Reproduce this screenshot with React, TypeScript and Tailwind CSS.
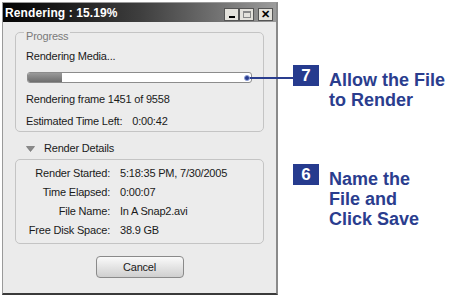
import React from "react"

const dialogFont = { fontFamily: '"Liberation Sans", Arial, sans-serif' }

const TitleButton = ({ children }: { children: React.ReactNode }) => (
    <div className="w-[15px] h-[13px] bg-[#e4e2dc] border border-[#555] flex items-center justify-center text-black">
        {children}
    </div>
)

const DetailRow = ({ label, value }: { label: string; value: string }) => (
    <div className="flex leading-[13px] mt-[6px] first:mt-0">
        <div className="w-[84px] text-right">{label}</div>
        <div className="ml-[10px]">{value}</div>
    </div>
)

const Callout = ({ num, lines }: { num: string; lines: string[] }) => (
    <div className="flex items-start">
        <div className="w-[26px] h-[21px] bg-[#263b8e] text-white font-bold text-[17px] flex items-center justify-center">
            {num}
        </div>
        <div className="ml-[10px] mt-[5px] text-[#2a3d8e] font-bold text-[18px] leading-[20px]">
            {lines.map((l, i) => (
                <div key={i}>{l}</div>
            ))}
        </div>
    </div>
)

export default function App() {
    return (
        <div className="relative w-[450px] h-[296px] bg-white flex overflow-hidden" style={dialogFont}>
            {/* dialog window */}
            <div className="ml-[2px] mt-[2px] w-[276px] h-[293px] border border-[#9a9a9a] border-r-2 border-b-2 border-b-[#3a3a3a] border-r-[#8a8a8a] bg-[#ebebeb] flex flex-col">
                <div className="h-[19px] bg-gradient-to-r from-[#050505] via-[#3e3e3e] to-[#9c9c9c] flex items-center pl-[2px] pr-[3px]">
                    <span className="text-white font-bold text-[12px] tracking-[0.1px]">Rendering : 15.19%</span>
                    <div className="ml-auto flex items-center mt-[3px]">
                        <TitleButton>
                            <div className="w-[6px] h-[2px] bg-black mt-[6px]" />
                        </TitleButton>
                        <TitleButton>
                            <div className="w-[8px] h-[7px] border border-[#888] border-t-2" />
                        </TitleButton>
                        <div className="w-[4px]" />
                        <TitleButton>
                            <span className="text-[11px] font-bold leading-none">✕</span>
                        </TitleButton>
                    </div>
                </div>

                <div className="px-[12px] text-[11px] text-[#1a1a1a] tracking-[-0.2px]">
                    <fieldset className="w-[249px] border border-[#c4c4c4] rounded-[5px] bg-[#ececec] px-[10px] pb-[3px]">
                        <legend className="ml-[-2px] px-[2px] pt-[8px] text-[#7a7a7a] leading-[13px]">Progress</legend>
                        <div className="mt-[7px] leading-[13px]">Rendering Media...</div>
                        <div className="mt-[9px] ml-[1px] w-[225px] h-[11px] rounded-[3px] border border-[#8c8c8c] bg-white overflow-hidden">
                            <div className="h-full bg-gradient-to-b from-[#9a9a9a] to-[#6e6e6e]" style={{ width: "15.19%" }} />
                        </div>
                        <div className="mt-[10px] leading-[13px]">Rendering frame 1451 of 9558</div>
                        <div className="mt-[9px] leading-[13px] flex">
                            <span>Estimated Time Left:</span>
                            <span className="ml-[10px]">0:00:42</span>
                        </div>
                    </fieldset>

                    <div className="mt-[10px] ml-[11px] flex items-center leading-[13px]">
                        <svg width="9" height="6" viewBox="0 0 9 6" className="mr-[9px]">
                            <path d="M0.5 0.5 L8.5 0.5 L4.5 5.5 Z" fill="#8a8a8a" stroke="#666" strokeWidth="0.6" />
                        </svg>
                        <span>Render Details</span>
                    </div>

                    <div className="mt-[4px] w-[249px] border border-[#c4c4c4] rounded-[5px] bg-[#ececec] pt-[7px] pb-[6px] px-[10px]">
                        <DetailRow label="Render Started:" value="5:18:35 PM, 7/30/2005" />
                        <DetailRow label="Time Elapsed:" value="0:00:07" />
                        <DetailRow label="File Name:" value="In A Snap2.avi" />
                        <DetailRow label="Free Disk Space:" value="38.9 GB" />
                    </div>

                    <div className="mt-[12px] flex justify-center">
                        <button className="w-[88px] h-[22px] rounded-[4px] border border-[#8a8a8a] bg-gradient-to-b from-[#fafafa] to-[#cfcfcf] text-[11px] text-[#1a1a1a]">
                            Cancel
                        </button>
                    </div>
                </div>
            </div>

            {/* callouts */}
            <div className="ml-[15px] flex flex-col">
                <div className="mt-[65px]">
                    <Callout num="7" lines={["Allow the File", "to Render"]} />
                </div>
                <div className="mt-[54px]">
                    <Callout num="6" lines={["Name the", "File and", "Click Save"]} />
                </div>
            </div>

            {/* leader line from progress bar to callout 7 */}
            <div className="absolute left-[247px] top-[77px] w-[47px] h-[2px] bg-[#2a3d8e]" />
            <div className="absolute left-[244px] top-[75px] w-[6px] h-[6px] rounded-full bg-[#2a3d8e] border border-[#8fa0d8]" />
        </div>
    )
}
